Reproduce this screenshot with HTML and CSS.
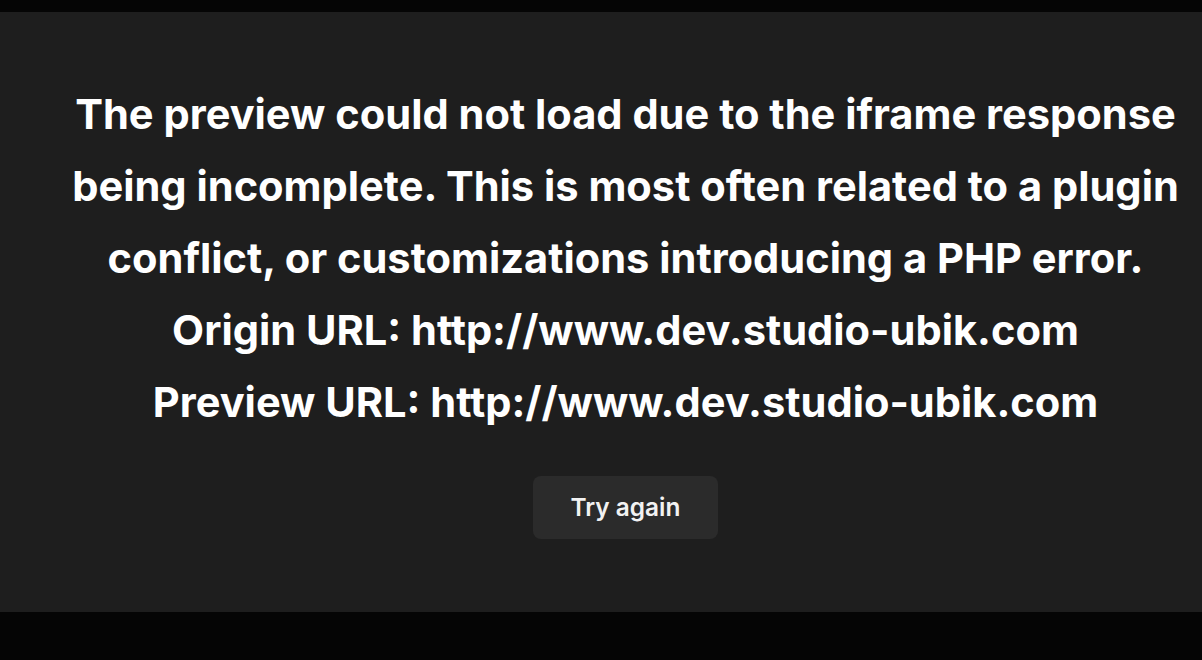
FILE: index.html
```html
<!DOCTYPE html>
<html lang="en">
<head>
<meta charset="utf-8">
<title>Preview error</title>
<link rel="stylesheet" href="styles.css">
</head>
<body>
<div class="topbar"></div>
<main class="panel">
  <div class="message">
    <p class="text">The preview could not load due to the iframe response being incomplete. This is most often related to a plugin conflict, or customizations introducing a PHP error.</p>
    <p class="text">Origin URL: http://www.dev.studio-ubik.com</p>
    <p class="text">Preview URL: http://www.dev.studio-ubik.com</p>
  </div>
  <button class="retry" type="button">Try again</button>
</main>
<div class="bottombar"></div>
</body>
</html>
```
FILE: styles.css
```css
html, body {
  margin: 0;
  padding: 0;
  background: #050505;
  font-family: Inter, "Noto Sans", "Liberation Sans", sans-serif;
}
.topbar {
  height: 12px;
  background: #050505;
}
.panel {
  height: 600px;
  background: #1e1e1e;
  display: flex;
  flex-direction: column;
  align-items: center;
  justify-content: center;
  padding-left: 49px;
  padding-bottom: 8px;
  box-sizing: border-box;
}
.message {
  max-width: 1130px;
  text-align: center;
}
.text {
  margin: 0;
  color: #ffffff;
  font-size: 41.6px;
  font-weight: 700;
  line-height: 72px;
}
.retry {
  margin-top: 38px;
  width: 185px;
  height: 63px;
  border: none;
  border-radius: 8px;
  background: #2b2b2b;
  color: #f2f2f2;
  font-family: inherit;
  font-size: 24.4px;
  font-weight: 600;
  cursor: pointer;
}
.bottombar {
  height: 48px;
  background: #050505;
}
```
